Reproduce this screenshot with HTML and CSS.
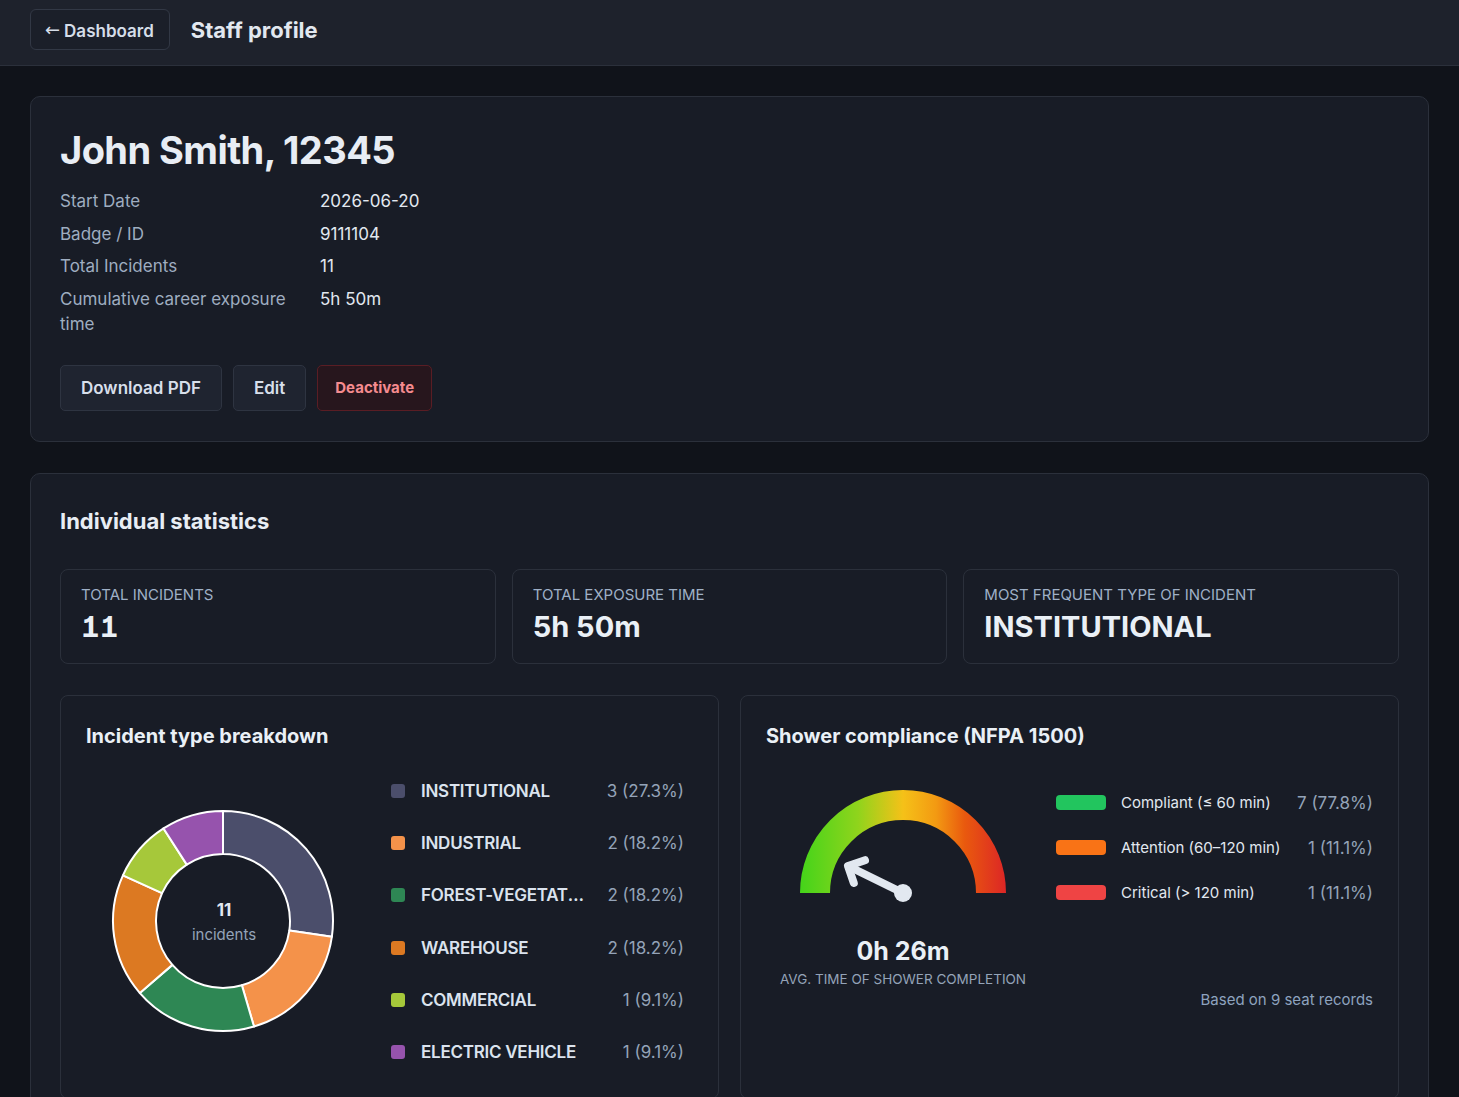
FILE: index.html
```html
<!DOCTYPE html>
<html lang="en">
<head>
    <meta charset="UTF-8">
    <meta name="viewport" content="width=device-width, initial-scale=1.0">
    <title>Staff profile</title>
    <link rel="stylesheet" href="styles.css">
</head>
<body>
    <header class="topbar">
        <a class="back-btn" href="#"><span class="arrow">&larr;</span>Dashboard</a>
        <h1 class="page-title">Staff profile</h1>
    </header>

    <main class="page">
        <section class="card profile">
            <h2 class="staff-name">John Smith, 12345</h2>
            <dl class="details">
                <dt>Start Date</dt><dd>2026-06-20</dd>
                <dt>Badge / ID</dt><dd>9111104</dd>
                <dt>Total Incidents</dt><dd>11</dd>
                <dt>Cumulative career exposure time</dt><dd>5h 50m</dd>
            </dl>
            <div class="actions">
                <button class="btn">Download PDF</button>
                <button class="btn">Edit</button>
                <button class="btn btn-danger">Deactivate</button>
            </div>
        </section>

        <section class="card stats">
            <h2 class="section-title">Individual statistics</h2>

            <div class="stat-grid">
                <div class="stat-card">
                    <div class="stat-label">Total incidents</div>
                    <div class="stat-value num">11</div>
                </div>
                <div class="stat-card">
                    <div class="stat-label">Total exposure time</div>
                    <div class="stat-value">5h 50m</div>
                </div>
                <div class="stat-card">
                    <div class="stat-label">Most frequent type of incident</div>
                    <div class="stat-value">INSTITUTIONAL</div>
                </div>
            </div>

            <div class="chart-grid">
                <div class="chart-card">
                    <h3 class="chart-title">Incident type breakdown</h3>
                    <div class="chart-body">
                        <div class="chart-figure">
                            <svg class="donut" width="230" height="230" viewBox="-2 -2 230 230">
                                <g stroke="#ffffff" stroke-width="2" stroke-linejoin="round">
                                    <path fill="#4b4e6b" d="M113,3 A110,110 0 0 1 221.88,128.65 L179.32,122.53 A67,67 0 0 0 113,46 Z"/>
                                    <path fill="#f4924a" d="M221.88,128.65 A110,110 0 0 1 143.99,218.54 L131.88,177.29 A67,67 0 0 0 179.32,122.53 Z"/>
                                    <path fill="#2e8754" d="M143.99,218.54 A110,110 0 0 1 29.87,185.03 L62.36,156.88 A67,67 0 0 0 131.88,177.29 Z"/>
                                    <path fill="#dc7922" d="M29.87,185.03 A110,110 0 0 1 12.94,67.30 L52.05,85.17 A67,67 0 0 0 62.36,156.88 Z"/>
                                    <path fill="#a6c83a" d="M12.94,67.30 A110,110 0 0 1 53.53,20.46 L76.78,56.64 A67,67 0 0 0 52.05,85.17 Z"/>
                                    <path fill="#9653ad" d="M53.53,20.46 A110,110 0 0 1 113,3 L113,46 A67,67 0 0 0 76.78,56.64 Z"/>
                                </g>
                                <text class="donut-total" x="114" y="108" text-anchor="middle">11</text>
                                <text class="donut-unit" x="114" y="132" text-anchor="middle">incidents</text>
                            </svg>
                        </div>
                        <ul class="legend">
                            <li><span class="swatch" style="background:#4b4e6b"></span><span class="legend-name">INSTITUTIONAL</span><span class="legend-val">3 (27.3%)</span></li>
                            <li><span class="swatch" style="background:#f4924a"></span><span class="legend-name">INDUSTRIAL</span><span class="legend-val">2 (18.2%)</span></li>
                            <li><span class="swatch" style="background:#2e8754"></span><span class="legend-name">FOREST-VEGETATION</span><span class="legend-val">2 (18.2%)</span></li>
                            <li><span class="swatch" style="background:#dc7922"></span><span class="legend-name">WAREHOUSE</span><span class="legend-val">2 (18.2%)</span></li>
                            <li><span class="swatch" style="background:#a6c83a"></span><span class="legend-name">COMMERCIAL</span><span class="legend-val">1 (9.1%)</span></li>
                            <li><span class="swatch" style="background:#9653ad"></span><span class="legend-name">ELECTRIC VEHICLE</span><span class="legend-val">1 (9.1%)</span></li>
                        </ul>
                    </div>
                </div>

                <div class="chart-card">
                    <h3 class="chart-title">Shower compliance (NFPA 1500)</h3>
                    <div class="chart-body shower">
                        <div class="chart-figure gauge-col">
                            <svg class="gauge" width="220" height="122" viewBox="0 0 220 122">
                                <defs>
                                    <linearGradient id="gauge-grad" gradientUnits="userSpaceOnUse" x1="7" y1="0" x2="213" y2="0">
                                        <stop offset="0" stop-color="#44d41a"/>
                                        <stop offset="0.28" stop-color="#8fd41c"/>
                                        <stop offset="0.5" stop-color="#f5c118"/>
                                        <stop offset="0.66" stop-color="#f39a12"/>
                                        <stop offset="0.8" stop-color="#e9590e"/>
                                        <stop offset="1" stop-color="#dc2626"/>
                                    </linearGradient>
                                </defs>
                                <path d="M22 110 A88 88 0 0 1 198 110" fill="none" stroke="url(#gauge-grad)" stroke-width="30"/>
                                <g stroke="#e2e8f0" stroke-width="8" stroke-linecap="round" stroke-linejoin="round" fill="none">
                                    <line x1="110" y1="110" x2="56" y2="83.5"/>
                                    <polyline points="72,77.2 55,83 60.8,100"/>
                                </g>
                                <circle cx="110" cy="110" r="9" fill="#e2e8f0"/>
                            </svg>
                            <div class="gauge-value">0h 26m</div>
                            <div class="gauge-caption">Avg. time of shower completion</div>
                        </div>
                        <div class="compliance">
                            <ul class="legend legend-bars">
                                <li><span class="bar" style="background:#22c55e"></span><span class="legend-name">Compliant (&le; 60 min)</span><span class="legend-val">7 (77.8%)</span></li>
                                <li><span class="bar" style="background:#f97316"></span><span class="legend-name">Attention (60&ndash;120 min)</span><span class="legend-val">1 (11.1%)</span></li>
                                <li><span class="bar" style="background:#ef4444"></span><span class="legend-name">Critical (&gt; 120 min)</span><span class="legend-val">1 (11.1%)</span></li>
                            </ul>
                            <p class="records-note">Based on 9 seat records</p>
                        </div>
                    </div>
                </div>
            </div>
        </section>
    </main>
</body>
</html>
```

FILE: styles.css
```css
* {
    box-sizing: border-box;
}

body {
    margin: 0;
    background-color: #10131a;
    color: #e2e8f0;
    font-family: Inter, "Noto Sans", sans-serif;
}

/* Top bar */
.topbar {
    height: 66px;
    padding: 0 30px;
    display: flex;
    align-items: center;
    gap: 21px;
    background-color: #1e222c;
    border-bottom: 1px solid #2b303b;
}

.back-btn {
    height: 41px;
    margin-top: -7px;
    padding: 3px 15px 0 14px;
    display: flex;
    align-items: center;
    gap: 4px;
    color: #d5dde8;
    text-decoration: none;
    font-size: 17px;
    font-weight: 600;
    border: 1px solid #323845;
    border-radius: 6px;
    background-color: #1b1f29;
}

.arrow {
    font-family: "DejaVu Sans", sans-serif;
    font-weight: 400;
    font-size: 18px;
    margin-top: -2px;
}

.page-title {
    margin: -6px 0 0;
    font-size: 22px;
    font-weight: 700;
    color: #e2e8f0;
}

/* Layout */
.page {
    padding: 30px;
    display: flex;
    flex-direction: column;
    gap: 31px;
}

.card {
    background-color: #181c26;
    border: 1px solid #2b303b;
    border-radius: 10px;
    padding: 29px 29px 30px;
}

/* Profile */
.staff-name {
    margin: 0 0 15px;
    font-size: 38px;
    line-height: 48px;
    font-weight: 700;
    letter-spacing: -0.015em;
    color: #e8edf4;
}

.details {
    margin: 0;
    display: grid;
    grid-template-columns: 240px 1fr;
    column-gap: 20px;
    row-gap: 7.5px;
    font-size: 17px;
    line-height: 25px;
}

.details dt {
    color: #9fadc0;
}

.details dd {
    margin: 0;
    color: #e2e8f0;
}

.actions {
    margin-top: 28px;
    display: flex;
    gap: 11px;
}

.btn {
    height: 46px;
    padding: 0 20px;
    font-family: inherit;
    font-size: 17px;
    font-weight: 600;
    color: #d7dfea;
    background-color: #1f2430;
    border: 1px solid #2e3441;
    border-radius: 5px;
    cursor: pointer;
}

.btn-danger {
    padding: 0 17px;
    font-size: 15px;
    font-weight: 700;
    color: #f58b8f;
    background-color: #27161d;
    border-color: #5a1d24;
}

/* Statistics */
.stats {
    padding-top: 30px;
}

.section-title {
    margin: 0 0 31px;
    font-size: 22px;
    line-height: 34px;
    font-weight: 700;
    color: #e8edf4;
}

.stat-grid {
    display: grid;
    grid-template-columns: repeat(3, minmax(0, 1fr));
    gap: 16px;
}

.stat-card {
    height: 95px;
    padding: 15px 20px;
    border: 1px solid #2b303b;
    border-radius: 8px;
}

.stat-label {
    font-size: 15px;
    line-height: 20px;
    text-transform: uppercase;
    color: #9fb0c6;
}

.stat-value {
    margin-top: 4px;
    font-size: 29px;
    line-height: 36px;
    font-weight: 700;
    color: #eaf0f6;
}

.stat-value.num {
    font-variant-numeric: tabular-nums;
    font-feature-settings: "tnum", "cv01";
}

.chart-grid {
    margin-top: 31px;
    display: grid;
    grid-template-columns: minmax(0, 1fr) minmax(0, 1fr);
    gap: 21px;
}

.chart-card {
    border: 1px solid #2b303b;
    border-radius: 8px;
    padding: 25px 25px 34px;
}

.chart-title {
    margin: 0 0 28px;
    font-size: 20px;
    line-height: 30px;
    font-weight: 700;
    color: #eaf0f6;
}

.chart-body {
    display: grid;
    grid-template-columns: 274px minmax(0, 1fr);
    column-gap: 31px;
    align-items: center;
}

.chart-body.shower {
    column-gap: 16px;
    align-items: start;
}

.chart-figure {
    display: flex;
    flex-direction: column;
    align-items: center;
}

.donut-total {
    font-size: 17px;
    font-weight: 700;
    fill: #e2e8f0;
}

.donut-unit {
    font-size: 15px;
    fill: #94a3b8;
}

/* Legends */
.legend {
    list-style: none;
    margin: 0;
    padding: 0 9px 0 0;
    min-width: 0;
    display: flex;
    flex-direction: column;
    gap: 28.4px;
}

.legend li {
    height: 24px;
    display: flex;
    align-items: center;
    gap: 16px;
}

.swatch {
    width: 14px;
    height: 14px;
    border-radius: 3px;
    flex-shrink: 0;
}

.legend-name {
    flex: 1;
    min-width: 0;
    overflow: hidden;
    white-space: nowrap;
    text-overflow: ellipsis;
    font-size: 17px;
    font-weight: 600;
    letter-spacing: -0.015em;
    color: #dbe3ee;
}

.legend-val {
    margin-left: 6px;
    font-size: 17px;
    color: #94a3b8;
    white-space: nowrap;
}

.gauge {
    margin-top: 4px;
}

.gauge-value {
    margin-top: 31px;
    font-size: 25px;
    line-height: 30px;
    font-weight: 700;
    color: #eaf0f6;
}

.gauge-caption {
    margin-top: 4px;
    font-size: 13.5px;
    line-height: 18px;
    text-transform: uppercase;
    color: #94a3b8;
}

.compliance {
    padding-top: 13px;
}

.legend-bars {
    padding: 0;
    gap: 23px;
}

.legend-bars li {
    height: 22px;
    gap: 15px;
}

.bar {
    width: 50px;
    height: 15px;
    border-radius: 4px;
    flex-shrink: 0;
}

.legend-bars .legend-name {
    font-size: 15px;
    font-weight: 400;
    letter-spacing: 0;
    color: #e2e8f0;
}

.records-note {
    margin: 86px 0 0;
    text-align: right;
    font-size: 15px;
    line-height: 20px;
    color: #8ea3bf;
}
```
